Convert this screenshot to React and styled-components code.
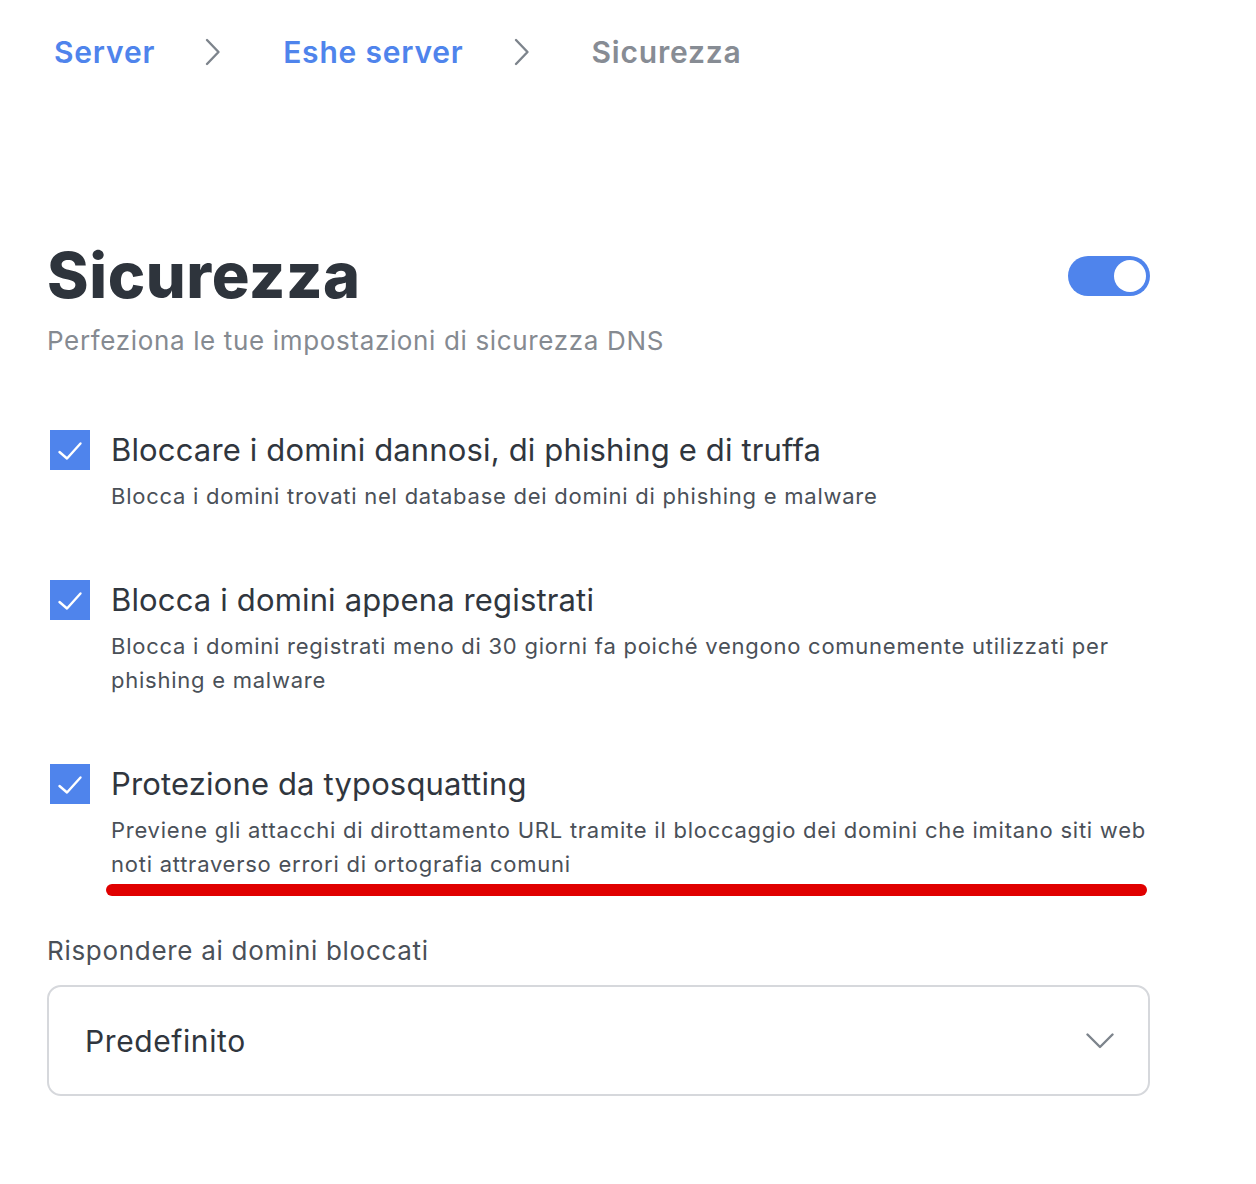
import React from "react";
import styled, { createGlobalStyle } from "styled-components";

const Global = createGlobalStyle`
  html, body { margin: 0; padding: 0; background: #ffffff; }
  body { font-family: Inter, "Noto Sans", sans-serif; -webkit-font-smoothing: antialiased; }
`;

const Page = styled.div`
  width: 1256px;
  min-height: 1184px;
  box-sizing: border-box;
  padding: 32px 106px 0 47px;
`;

const Breadcrumb = styled.nav`
  display: flex;
  align-items: center;
  padding-left: 7px;
  height: 40px;
`;

const Crumb = styled.span`
  font-size: 30px;
  font-weight: 600;
  letter-spacing: 0.8px;
  color: ${(p) => (p.$current ? "#878c94" : "#4f84ec")};
`;

const Sep = styled.span`
  display: flex;
  align-items: center;
  margin: 0 ${(p) => p.$right}px 0 ${(p) => p.$left}px;
`;

const Header = styled.header`
  display: flex;
  justify-content: space-between;
  align-items: flex-start;
  margin-top: 165px;
`;

const TitleBlock = styled.div`
  display: flex;
  flex-direction: column;
`;

const Title = styled.h1`
  margin: 0;
  font-size: 63px;
  font-weight: 800;
  letter-spacing: 0.6px;
  line-height: 76px;
  color: #2e343c;
`;

const Subtitle = styled.p`
  margin: 12px 0 0;
  font-size: 26px;
  line-height: 32px;
  color: #858a91;
  letter-spacing: 0.65px;
`;

const Toggle = styled.div`
  width: 82px;
  height: 40px;
  border-radius: 20px;
  background: #4f84ec;
  display: flex;
  align-items: center;
  justify-content: flex-end;
  padding: 0 4px;
  box-sizing: border-box;
  margin-top: 19px;
`;

const Knob = styled.div`
  width: 32px;
  height: 32px;
  border-radius: 50%;
  background: #ffffff;
`;

const List = styled.div`
  display: flex;
  flex-direction: column;
  gap: 67px;
  margin-top: 73px;
`;

const Item = styled.div`
  display: grid;
  grid-template-columns: 40px 1fr;
  column-gap: 21px;
  padding-left: 3px;
`;

const Box = styled.div`
  width: 40px;
  height: 40px;
  background: #4f84ec;
  display: flex;
  align-items: center;
  justify-content: center;
`;

const ItemText = styled.div`
  display: flex;
  flex-direction: column;
`;

const ItemTitle = styled.div`
  font-size: 31px;
  line-height: 40px;
  color: #30363e;
  letter-spacing: 0.15px;
`;

const ItemDesc = styled.div`
  margin-top: 9px;
  font-size: 22px;
  line-height: 34px;
  color: #4a5058;
  letter-spacing: 0.75px;
`;

const RedLine = styled.div`
  height: 12px;
  border-radius: 6px;
  background: #e00000;
  margin: 3px 0 0 59px;
  width: 1041px;
`;

const FieldLabel = styled.div`
  margin-top: 39px;
  font-size: 26px;
  line-height: 32px;
  color: #4a5058;
  letter-spacing: 0.7px;
`;

const Select = styled.div`
  margin-top: 18px;
  height: 111px;
  box-sizing: border-box;
  border: 2px solid #d6d8dc;
  border-radius: 14px;
  display: flex;
  align-items: center;
  justify-content: space-between;
  padding: 0 34px 0 36px;
`;

const SelectValue = styled.span`
  font-size: 30px;
  color: #30363e;
  letter-spacing: 0.6px;
`;

const ChevronRight = () => (
  <svg width="16" height="28" viewBox="0 0 16 28" fill="none">
    <path d="M2 2 L13.5 14 L2 26" stroke="#7d848c" strokeWidth="2.4" strokeLinecap="round" strokeLinejoin="round" />
  </svg>
);

const ChevronDown = () => (
  <svg width="28" height="16" viewBox="0 0 28 16" fill="none">
    <path d="M1.5 1.5 L14 14 L26.5 1.5" stroke="#7d848c" strokeWidth="2.4" strokeLinecap="round" strokeLinejoin="round" />
  </svg>
);

const Check = () => (
  <svg width="40" height="40" viewBox="0 0 40 40" fill="none">
    <path d="M9.5 22 L17 28.5 L30.5 13.5" stroke="#fff" strokeWidth="2.4" strokeLinecap="round" strokeLinejoin="round" />
  </svg>
);

const items = [
  {
    title: "Bloccare i domini dannosi, di phishing e di truffa",
    desc: "Blocca i domini trovati nel database dei domini di phishing e malware",
  },
  {
    title: "Blocca i domini appena registrati",
    desc: "Blocca i domini registrati meno di 30 giorni fa poiché vengono comunemente utilizzati per phishing e malware",
  },
  {
    title: "Protezione da typosquatting",
    desc: "Previene gli attacchi di dirottamento URL tramite il bloccaggio dei domini che imitano siti web noti attraverso errori di ortografia comuni",
  },
];

export default function App() {
  return (
    <>
      <Global />
      <Page>
        <Breadcrumb>
          <Crumb>Server</Crumb>
          <Sep $left={50} $right={62}>
            <ChevronRight />
          </Sep>
          <Crumb>Eshe server</Crumb>
          <Sep $left={50} $right={62}>
            <ChevronRight />
          </Sep>
          <Crumb $current>Sicurezza</Crumb>
        </Breadcrumb>

        <Header>
          <TitleBlock>
            <Title>Sicurezza</Title>
            <Subtitle>Perfeziona le tue impostazioni di sicurezza DNS</Subtitle>
          </TitleBlock>
          <Toggle>
            <Knob />
          </Toggle>
        </Header>

        <List>
          {items.map((it) => (
            <Item key={it.title}>
              <Box>
                <Check />
              </Box>
              <ItemText>
                <ItemTitle>{it.title}</ItemTitle>
                <ItemDesc>{it.desc}</ItemDesc>
              </ItemText>
            </Item>
          ))}
        </List>
        <RedLine />

        <FieldLabel>Rispondere ai domini bloccati</FieldLabel>
        <Select>
          <SelectValue>Predefinito</SelectValue>
          <ChevronDown />
        </Select>
      </Page>
    </>
  );
}
